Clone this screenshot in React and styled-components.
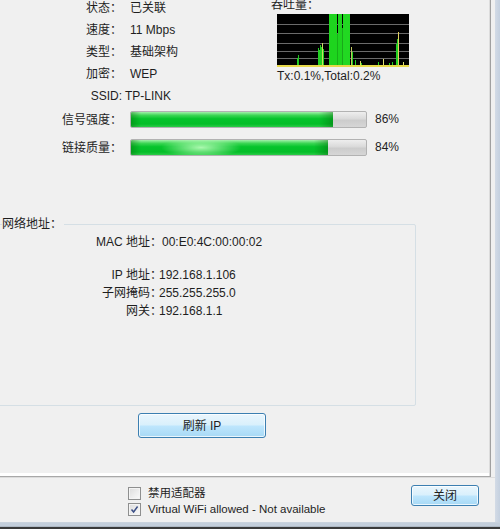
import React from 'react';
import styled, { createGlobalStyle } from 'styled-components';

const GlobalStyle = createGlobalStyle`
  html, body {
    margin: 0;
    padding: 0;
    background: #f0f0f0;
  }
  body {
    font-family: "Liberation Sans", "Noto Sans CJK SC", sans-serif;
    font-size: 12px;
    color: #1e1e1e;
  }
`;

const info = [
  { label: '状态：', value: '已关联' },
  { label: '速度：', value: '11 Mbps' },
  { label: '类型：', value: '基础架构' },
  { label: '加密：', value: 'WEP' },
  { label: 'SSID:', value: 'TP-LINK', tight: true },
];

const signals = [
  { label: '信号强度：', value: 86 },
  { label: '链接质量：', value: 84, glow: true },
];

const address = [
  { label: 'MAC 地址：', value: '00:E0:4C:00:00:02', gapAfter: true, wide: true },
  { label: 'IP 地址：', value: '192.168.1.106' },
  { label: '子网掩码：', value: '255.255.255.0' },
  { label: '网关：', value: '192.168.1.1' },
];

// x, top (local to chart), color, width
const spikes = [
  [20, 44, '#22d022', 1], [21, 41, '#1fc21f', 1],
  [41, 34, '#22d022', 1], [42, 36, '#22d022', 1], [43, 31, '#22d022', 1],
  [44, 33, '#22d022', 1], [45, 29, '#c8e060', 1], [46, 35, '#22d022', 1],
  [52, 0, '#1ed41e', 8], [60, 20, '#17b017', 1], [61, 0, '#1ed41e', 4],
  [65, 14, '#1aa81a', 1], [66, 0, '#22d822', 7],
  [74, 33, '#c0c860', 1], [75, 38, '#22d022', 1], [78, 46, '#22d022', 1],
  [83, 47, '#d8d860', 1], [84, 49, '#22d022', 1],
  [101, 48, '#22d022', 1], [106, 45, '#e0e070', 1], [112, 49, '#22d022', 1],
  [115, 48, '#22d022', 1],
  [119, 30, '#22d022', 1], [120, 25, '#22d022', 2], [121, 18, '#e0d060', 1],
  [126, 48, '#e0e070', 1],
];

const Window = styled.div`
  width: 500px;
  height: 529px;
  display: flex;
  flex-direction: column;
  overflow: hidden;
`;

const Frame = styled.div`
  flex: 1;
  display: flex;
`;

const RightEdge = styled.div`
  width: 5px;
  background: linear-gradient(to right, #d3dbe6, #c4d0df);
`;

const BottomEdge = styled.div`
  height: 7px;
  background: linear-gradient(
    to bottom,
    #cfd6de 0,
    #c3cedb 1px,
    #c3cedb 4px,
    #9aa3ad 5px,
    #3a3a3a 5px
  );
`;

const Dialog = styled.div`
  width: 495px;
  display: flex;
  flex-direction: column;
`;

const TabPanel = styled.div`
  width: 490px;
  height: 476px;
  border-right: 1px solid #a0a0a0;
  border-bottom: 1px solid #a8a8a8;
  box-shadow: inset -1px 0 0 #dcdcdc, inset 0 -3px 0 #ffffff;
`;

const TopSection = styled.div`
  display: flex;
  height: 100px;
`;

const InfoGrid = styled.div`
  width: 271px;
  display: grid;
  grid-template-columns: 122px auto;
  grid-auto-rows: 16px;
  column-gap: 8px;
  row-gap: 6px;
  line-height: 16px;
  align-content: start;
`;

const Label = styled.span`
  text-align: right;
  white-space: nowrap;
`;

const Value = styled.span`
  white-space: nowrap;
  margin-left: ${(p) => (p.$tight ? '-5px' : '0')};
`;

const Throughput = styled.div`
  display: flex;
  flex-direction: column;
`;

const ChartTitle = styled.div`
  line-height: 11px;
  height: 12px;
`;

const Chart = styled.svg`
  display: block;
  margin: 2px 0 0 6px;
`;

const Rate = styled.div`
  margin: 1px 0 0 6px;
  height: 16px;
  line-height: 16px;
`;

const SignalGrid = styled.div`
  margin-top: 11px;
  display: grid;
  grid-template-columns: 122px 237px auto;
  grid-auto-rows: 17px;
  column-gap: 8px;
  row-gap: 11px;
  align-items: center;
  line-height: 16px;
`;

const Track = styled.div`
  height: 15px;
  border: 1px solid #b2b2b2;
  border-radius: 2px;
  background: linear-gradient(to bottom, #eeeeee 0%, #dadada 45%, #cccccc 55%, #d6d6d6 100%);
  overflow: hidden;
  display: flex;
`;

const Fill = styled.div`
  height: 100%;
  background:
    ${(p) =>
      p.$glow
        ? 'radial-gradient(ellipse 40px 10px at 70px 50%, rgba(190,255,190,0.9), rgba(190,255,190,0) 100%),'
        : ''}
    linear-gradient(to right, rgba(0,90,0,0.35) 0, rgba(0,90,0,0) 10px, rgba(0,90,0,0) calc(100% - 14px), rgba(0,80,0,0.35) 100%),
    linear-gradient(to bottom, #a4f0ac 0%, #3cd654 22%, #06c42c 45%, #05be29 80%, #2ccc48 100%);
`;

const Percent = styled.span`
  line-height: 16px;
  margin-top: -2px;
`;

const GroupBox = styled.fieldset`
  margin: 60px 0 0 -6px;
  padding: 0;
  width: 420px;
  height: 188px;
  border: 1px solid #d5dfe5;
  border-radius: 2px;
  box-sizing: content-box;
`;

const GroupLegend = styled.legend`
  margin-left: 7px;
  padding: 0 2px 0 0;
  height: 16px;
  line-height: 16px;
`;

const AddressGrid = styled.div`
  display: grid;
  grid-template-columns: 162px auto;
  column-gap: 2px;
  padding-top: 1px;
  line-height: 18px;
`;

const AddressLabel = styled.span`
  height: 18px;
  text-align: right;
  white-space: nowrap;
  margin-right: -5px;
`;

const AddressValue = styled.span`
  height: 18px;
  white-space: nowrap;
  margin-left: ${(p) => (p.$wide ? '3px' : '0')};
`;

const AddressSpacer = styled.div`
  grid-column: 1 / -1;
  height: 15px;
`;

const Button = styled.button`
  font: inherit;
  line-height: 16px;
  color: #1e1e1e;
  width: ${(p) => p.$w}px;
  height: ${(p) => p.$h}px;
  padding: 0;
  border: 1px solid #3c7fb1;
  border-radius: 3px;
  background: linear-gradient(to bottom, #eaf6fd 0%, #d9f0fc 48%, #bee6fd 52%, #a7d9f5 100%);
  box-shadow: inset 0 0 0 1px rgba(255, 255, 255, 0.75);
`;

const RefreshButton = styled(Button)`
  display: block;
  margin: 7px 0 0 138px;
`;

const Footer = styled.div`
  flex: 1;
  display: flex;
  padding: 6px 16px 0 128px;
  box-shadow: inset 0 1px 0 #dcdcdc;
`;

const Checks = styled.div`
  display: flex;
  flex-direction: column;
  padding-top: 2px;
`;

const CheckRow = styled.label`
  display: flex;
  align-items: center;
  gap: 7px;
  height: 16px;
  line-height: 16px;
  font-size: 11.5px;
  white-space: nowrap;
`;

const Box = styled.span`
  width: 11px;
  height: 11px;
  border: 1px solid #8e8f8f;
  background: linear-gradient(135deg, #dcdcdc, #fbfbfb);
  box-shadow: inset 0 0 0 1px #f4f4f4;
  display: flex;
  align-items: center;
  justify-content: center;
`;

const CloseButton = styled(Button)`
  margin: 2px 0 0 auto;
`;

const Checkbox = ({ checked, children }) => (
  <CheckRow>
    <Box>
      {checked && (
        <svg width="9" height="9" viewBox="0 0 9 9">
          <path d="M1.5 4.5 L3.6 7 L7.6 1.5" fill="none" stroke="#3b4f86" strokeWidth="1.5" />
        </svg>
      )}
    </Box>
    {children}
  </CheckRow>
);

const ThroughputChart = () => (
  <Chart width="132" height="53" viewBox="0 0 132 53">
    <rect width="132" height="53" fill="#000" />
    {[10, 19, 29, 37, 44].map((y) => (
      <line key={y} x1="0" x2="132" y1={y + 0.5} y2={y + 0.5} stroke="#6a6a6a" strokeWidth="1" />
    ))}
    {spikes.map(([x, top, color, w], i) => (
      <rect key={i} x={x} y={top} width={w} height={52 - top} fill={color} />
    ))}
    <rect x="0" y="51" width="132" height="2" fill="#e6d84a" />
  </Chart>
);

const App = () => {
  return (
    <>
      <GlobalStyle />
      <Window>
        <Frame>
          <Dialog>
            <TabPanel>
              <TopSection>
                <InfoGrid>
                  {info.map((row) => (
                    <React.Fragment key={row.label}>
                      <Label>{row.label}</Label>
                      <Value $tight={row.tight}>{row.value}</Value>
                    </React.Fragment>
                  ))}
                </InfoGrid>
                <Throughput>
                  <ChartTitle>吞吐量：</ChartTitle>
                  <ThroughputChart />
                  <Rate>Tx:0.1%,Total:0.2%</Rate>
                </Throughput>
              </TopSection>

              <SignalGrid>
                {signals.map((s) => (
                  <React.Fragment key={s.label}>
                    <Label>{s.label}</Label>
                    <Track>
                      <Fill $glow={s.glow} style={{ width: `${s.value}%` }} />
                    </Track>
                    <Percent>{s.value}%</Percent>
                  </React.Fragment>
                ))}
              </SignalGrid>

              <GroupBox>
                <GroupLegend>网络地址：</GroupLegend>
                <AddressGrid>
                  {address.map((a) => (
                    <React.Fragment key={a.label}>
                      <AddressLabel>{a.label}</AddressLabel>
                      <AddressValue $wide={a.wide}>{a.value}</AddressValue>
                      {a.gapAfter && <AddressSpacer />}
                    </React.Fragment>
                  ))}
                </AddressGrid>
              </GroupBox>

              <RefreshButton $w={128} $h={25}>刷新 IP</RefreshButton>
            </TabPanel>

            <Footer>
              <Checks>
                <Checkbox>禁用适配器</Checkbox>
                <Checkbox checked>Virtual WiFi allowed - Not available</Checkbox>
              </Checks>
              <CloseButton $w={68} $h={21}>关闭</CloseButton>
            </Footer>
          </Dialog>
          <RightEdge />
        </Frame>
        <BottomEdge />
      </Window>
    </>
  );
};

export default App;
